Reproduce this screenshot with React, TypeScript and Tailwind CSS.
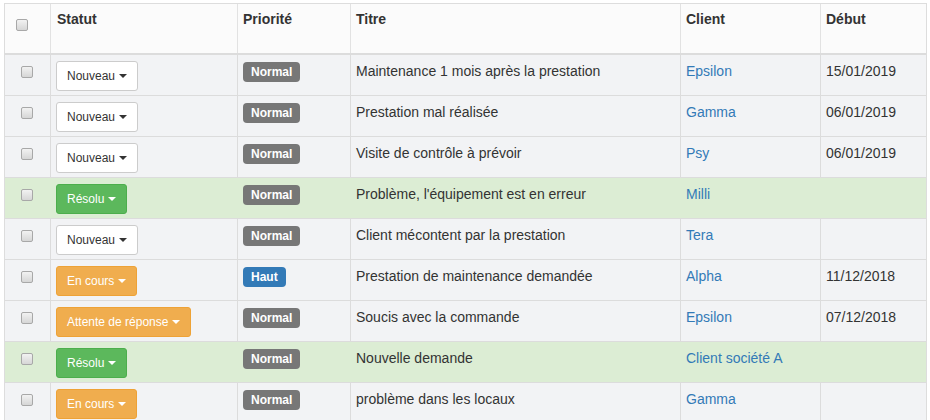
import React from "react";

type Status = "nouveau" | "resolu" | "encours" | "attente";

type Row = {
  status: Status;
  priority: "Normal" | "Haut";
  title: string;
  client: string;
  start: string;
};

const rows: Row[] = [
  { status: "nouveau", priority: "Normal", title: "Maintenance 1 mois après la prestation", client: "Epsilon", start: "15/01/2019" },
  { status: "nouveau", priority: "Normal", title: "Prestation mal réalisée", client: "Gamma", start: "06/01/2019" },
  { status: "nouveau", priority: "Normal", title: "Visite de contrôle à prévoir", client: "Psy", start: "06/01/2019" },
  { status: "resolu", priority: "Normal", title: "Problème, l'équipement est en erreur", client: "Milli", start: "" },
  { status: "nouveau", priority: "Normal", title: "Client mécontent par la prestation", client: "Tera", start: "" },
  { status: "encours", priority: "Haut", title: "Prestation de maintenance demandée", client: "Alpha", start: "11/12/2018" },
  { status: "attente", priority: "Normal", title: "Soucis avec la commande", client: "Epsilon", start: "07/12/2018" },
  { status: "resolu", priority: "Normal", title: "Nouvelle demande", client: "Client société A", start: "" },
  { status: "encours", priority: "Normal", title: "problème dans les locaux", client: "Gamma", start: "" },
];

const statusLabel: Record<Status, string> = {
  nouveau: "Nouveau",
  resolu: "Résolu",
  encours: "En cours",
  attente: "Attente de réponse",
};

const statusClass: Record<Status, string> = {
  nouveau: "bg-white border-[#ccc] text-[#333]",
  resolu: "bg-[#5cb85c] border-[#4cae4c] text-white",
  encours: "bg-[#f0ad4e] border-[#eea236] text-white",
  attente: "bg-[#f0ad4e] border-[#eea236] text-white",
};

const cols = "grid grid-cols-[45px_187px_113px_330px_140px_106px]";

function Checkbox() {
  return (
    <span className="block w-[12px] h-[12px] rounded-[2px] border border-[#a8a8a8] bg-gradient-to-b from-[#f2f2f2] to-[#d6d6d6]" />
  );
}

function StatusButton({ status }: { status: Status }) {
  const caret = status === "nouveau" ? "border-t-[#333]" : "border-t-white";
  return (
    <span
      className={`inline-flex items-center h-[30px] px-[10px] border rounded-[3px] text-[12px] whitespace-nowrap ${statusClass[status]}`}
    >
      {statusLabel[status]}
      <span className={`ml-[4px] w-0 h-0 border-t-[4px] border-x-[4px] border-x-transparent ${caret}`} />
    </span>
  );
}

export default function App() {
  return (
    <div
      className="w-[930px] h-[420px] overflow-hidden bg-white pt-[3px] pl-[4px]"
      style={{ fontFamily: '"Liberation Sans", Arial, sans-serif' }}
    >
      <div className="w-[923px] border-t border-l border-r border-[#ddd] text-[14px] text-[#333]">
        {/* Header */}
        <div className={`${cols} h-[51px] bg-[#fbfbfb] border-b-2 border-[#dcdcdc] font-bold`}>
          <div className="pt-[15px] pl-[11px]">
            <Checkbox />
          </div>
          <div className="border-l border-[#e2e2e2] pt-[5px] px-[6px] leading-[20px]">Statut</div>
          <div className="border-l border-[#e2e2e2] pt-[5px] px-[5px] leading-[20px]">Priorité</div>
          <div className="border-l border-[#e2e2e2] pt-[5px] px-[5px] leading-[20px]">Titre</div>
          <div className="border-l border-[#e2e2e2] pt-[5px] px-[5px] leading-[20px]">Client</div>
          <div className="border-l border-[#e2e2e2] pt-[5px] px-[5px] leading-[20px]">Début</div>
        </div>

        {rows.map((r, i) => {
          const ok = r.status === "resolu";
          const bg = ok ? "bg-[#dcedd4]" : "bg-[#f2f3f5]";
          const line = ok ? "border-[#dcedd4]" : "border-[#dcdcdc]";
          return (
            <div key={i} className={`${cols} h-[41px] border-b border-[#dcdcdc] ${bg}`}>
              <div className="pt-[11px] pl-[16px]">
                <Checkbox />
              </div>
              <div className={`border-l ${line} pt-[6px] pl-[5px]`}>
                <StatusButton status={r.status} />
              </div>
              <div className={`border-l ${line} pt-[6px] pl-[5px]`}>
                <span
                  className={`inline-block h-[20px] leading-[20px] px-[8px] rounded-[4px] text-[12px] font-bold text-white ${
                    r.priority === "Haut" ? "bg-[#337ab7]" : "bg-[#777]"
                  }`}
                >
                  {r.priority}
                </span>
              </div>
              <div className={`border-l ${line} pt-[6px] px-[5px] leading-[20px] whitespace-nowrap`}>{r.title}</div>
              <div className={`border-l ${line} pt-[6px] px-[5px] leading-[20px] text-[#337ab7] whitespace-nowrap`}>
                {r.client}
              </div>
              <div className={`border-l ${line} pt-[6px] px-[5px] leading-[20px]`}>{r.start}</div>
            </div>
          );
        })}
      </div>
    </div>
  );
}
